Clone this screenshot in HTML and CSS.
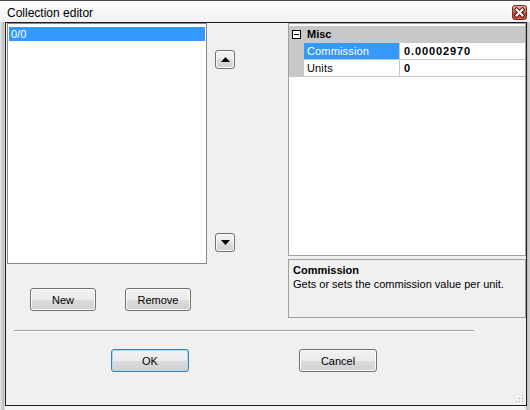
FILE: index.html
```html
<!DOCTYPE html>
<html lang="en">
<head>
<meta charset="UTF-8">
<title>Collection editor</title>
<link rel="stylesheet" href="styles.css">
</head>
<body>
<div class="window">
    <div class="titlebar">
        <span class="title">Collection editor</span>
        <span class="close">
            <svg width="13" height="13" viewBox="0 0 13 13">
                <path d="M3.5 3.5 L9.5 9.5 M9.5 3.5 L3.5 9.5" stroke="#4a1a12" stroke-width="4" stroke-linecap="square"/>
                <path d="M3.5 3.5 L9.5 9.5 M9.5 3.5 L3.5 9.5" stroke="#fff" stroke-width="2" stroke-linecap="square"/>
            </svg>
        </span>
    </div>
    <div class="client">
        <div class="main">
            <div class="left">
                <div class="listbox">
                    <div class="item selected">0/0</div>
                </div>
                <div class="actions">
                    <button class="btn">New</button>
                    <button class="btn">Remove</button>
                </div>
            </div>
            <div class="arrows">
                <button class="arrow">
                    <svg width="9" height="5" viewBox="0 0 9 5"><path d="M0 5 L4.5 0 L9 5 Z" fill="#000"/></svg>
                </button>
                <button class="arrow">
                    <svg width="9" height="5" viewBox="0 0 9 5"><path d="M0 0 L9 0 L4.5 5 Z" fill="#000"/></svg>
                </button>
            </div>
            <div class="right">
                <div class="propgrid">
                    <div class="category">
                        <span class="toggle"><span class="minus"></span></span>
                        <span class="cat-name">Misc</span>
                    </div>
                    <div class="prop selected">
                        <span class="gutter"></span>
                        <span class="name">Commission</span>
                        <span class="value">0.00002970</span>
                    </div>
                    <div class="prop">
                        <span class="gutter"></span>
                        <span class="name">Units</span>
                        <span class="value">0</span>
                    </div>
                </div>
                <div class="help">
                    <div class="help-title">Commission</div>
                    <div>Gets or sets the commission value per unit.</div>
                </div>
            </div>
        </div>
        <div class="separator"></div>
        <div class="dialog-buttons">
            <button class="btn btn-wide btn-default">OK</button>
            <button class="btn btn-wide">Cancel</button>
        </div>
        <svg class="grip" width="8" height="8" viewBox="0 0 8 8">
            <rect x="6" y="0" width="1" height="1" fill="#a0a0a0"/>
            <rect x="3" y="3" width="1" height="1" fill="#a0a0a0"/>
            <rect x="6" y="3" width="1" height="1" fill="#a0a0a0"/>
            <rect x="0" y="6" width="1" height="1" fill="#a0a0a0"/>
            <rect x="3" y="6" width="1" height="1" fill="#a0a0a0"/>
            <rect x="6" y="6" width="1" height="1" fill="#a0a0a0"/>
        </svg>
    </div>
</div>
</body>
</html>
```

FILE: styles.css
```css
body {
    margin: 0;
    background: #c9cbce;
    font-family: "Liberation Sans", Arial, sans-serif;
    font-size: 11px;
}
.window {
    width: 530px;
    height: 410px;
    box-sizing: border-box;
    border-top: 1px solid #4a4a4a;
    background: linear-gradient(to right, #e6e6e6 0, #b8b8b8 4px, #f4f5f6 5px, #f4f5f6 525px, #b8b8b8 527px, #d8d8d8 530px);
}
.titlebar {
    height: 21px;
    display: flex;
    align-items: flex-start;
    justify-content: space-between;
    padding: 0 3px 0 7px;
    background: linear-gradient(#fcfcfc, #f0f1f3);
}
.title {
    font-size: 12px;
    color: #000;
    line-height: 14px;
    margin-top: 5px;
}
.close {
    width: 13px;
    height: 13px;
    margin-top: 4px;
    border: 1px solid #7a2c1e;
    border-radius: 3px;
    background: linear-gradient(#eab0a2 0%, #d7735e 45%, #c23d26 55%, #d35a3c 100%);
    display: flex;
}
.client {
    position: relative;
    margin: 0 3px 0 5px;
    height: 382px;
    border: 1px solid #1e1e1e;
    background: #f0f0f0;
}
.main {
    display: flex;
    align-items: flex-start;
}
.left {
    margin-left: 1px;
}
.listbox {
    width: 200px;
    height: 241px;
    box-sizing: border-box;
    border: 1px solid #828790;
    background: #fff;
    padding: 3px 1px 1px 1px;
}
.item {
    height: 14px;
    line-height: 14px;
    padding-left: 2px;
}
.item.selected {
    background: #3399ff;
    color: #fff;
}
.actions {
    display: flex;
    gap: 29px;
    margin: 24px 0 0 23px;
}
.btn {
    width: 66px;
    height: 23px;
    padding: 0;
    font-family: "Liberation Sans", Arial, sans-serif;
    font-size: 11px;
    color: #000;
    border: 1px solid #707070;
    border-radius: 3px;
    background: linear-gradient(#f2f2f2 0%, #ebebeb 50%, #dddddd 50%, #cfcfcf 100%);
    box-shadow: inset 0 0 0 1px #fcfcfc;
}
.btn-wide {
    width: 78px;
}
.btn-default {
    border-color: #3c7fb1;
    box-shadow: inset 0 0 0 1px #a9dcf4;
}
.arrows {
    height: 241px;
    margin-left: 8px;
    padding-top: 27px;
    padding-bottom: 12px;
    box-sizing: border-box;
    display: flex;
    flex-direction: column;
    justify-content: space-between;
}
.arrow {
    width: 20px;
    height: 19px;
    padding: 0;
    display: flex;
    align-items: center;
    justify-content: center;
    border: 1px solid #707070;
    border-radius: 3px;
    background: linear-gradient(#f2f2f2 0%, #ebebeb 50%, #dddddd 50%, #cfcfcf 100%);
    box-shadow: inset 0 0 0 1px #fcfcfc;
}
.right {
    margin-left: 53px;
    width: 238px;
    display: flex;
    flex-direction: column;
    gap: 3px;
}
.propgrid {
    height: 233px;
    box-sizing: border-box;
    border: 1px solid #a0a0a0;
    background: #fff;
    padding-top: 2px;
}
.category, .prop {
    display: flex;
    height: 16px;
    line-height: 16px;
    border-bottom: 1px solid #c8c8c8;
}
.category {
    background: #c8c8c8;
    font-weight: bold;
    align-items: center;
}
.toggle {
    width: 7px;
    height: 7px;
    margin: 0 6px 0 3px;
    border: 1px solid #000;
    background: #fff;
    display: flex;
    align-items: center;
    justify-content: center;
}
.minus {
    width: 5px;
    height: 1px;
    background: #000;
}
.gutter {
    width: 15px;
    background: #c8c8c8;
}
.name {
    width: 92px;
    padding-left: 3px;
    border-right: 1px solid #c8c8c8;
    letter-spacing: 0.15px;
}
.prop.selected .name {
    background: #3399ff;
    color: #fff;
}
.value {
    padding-left: 4px;
    font-weight: bold;
    letter-spacing: 0.9px;
}
.help {
    height: 59px;
    box-sizing: border-box;
    border: 1px solid #a0a0a0;
    padding: 3px 4px;
    line-height: 14px;
}
.help-title {
    font-weight: bold;
}
.separator {
    width: 460px;
    margin: 12px 0 0 8px;
    border-top: 1px solid #a0a0a0;
    border-bottom: 1px solid #fff;
}
.dialog-buttons {
    display: flex;
    gap: 110px;
    margin: 17px 0 0 105px;
}
.grip {
    position: absolute;
    right: 2px;
    bottom: 2px;
}
```
